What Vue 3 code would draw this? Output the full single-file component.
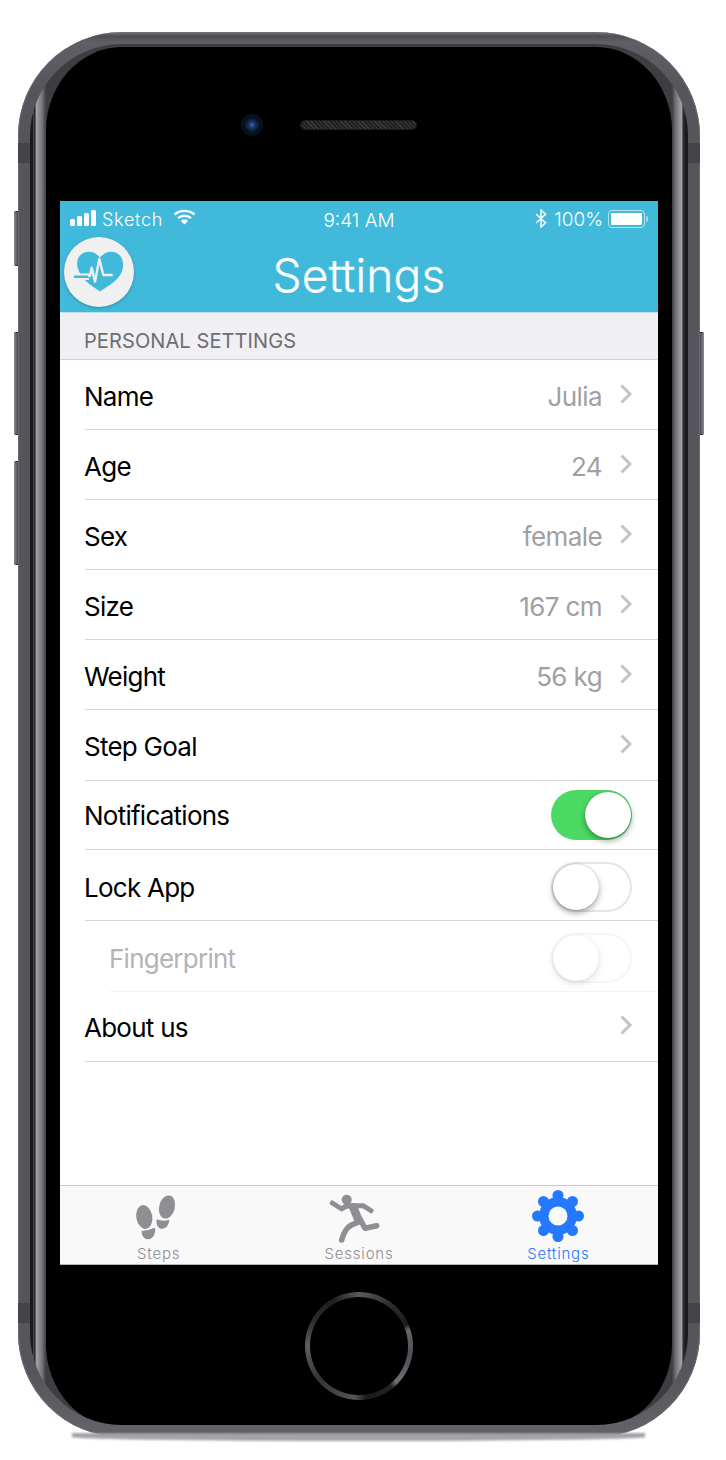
<script setup>
const rows = [
  { label: 'Name', value: 'Julia', kind: 'nav' },
  { label: 'Age', value: '24', kind: 'nav' },
  { label: 'Sex', value: 'female', kind: 'nav' },
  { label: 'Size', value: '167 cm', kind: 'nav' },
  { label: 'Weight', value: '56 kg', kind: 'nav' },
  { label: 'Step Goal', value: '', kind: 'nav' },
  { label: 'Notifications', kind: 'on', cls: 'short' },
  { label: 'Lock App', kind: 'off', cls: 'tall' },
  { label: 'Fingerprint', kind: 'off', cls: 'tall disabled' },
  { label: 'About us', value: '', kind: 'nav' }
]
const teeth = [0, 45, 90, 135, 180, 225, 270, 315]
</script>

<template>
  <div class="page">
    <div class="phone">
      <span class="btn left b1"></span>
      <span class="btn left b2"></span>
      <span class="btn left b3"></span>
      <span class="btn right b2"></span>
      <span class="floor"></span>
      <span class="ant al at"></span>
      <span class="ant ar at"></span>
      <span class="ant al ab"></span>
      <span class="ant ar ab"></span>
      <div class="rim">
        <div class="front">
          <div class="top">
            <span class="camera"></span>
            <span class="speaker"></span>
          </div>
          <div class="screen">
            <header class="nav">
              <div class="status">
                <div class="status-left">
                  <span class="bars"><i></i><i></i><i></i><i></i></span>
                  <span class="carrier">Sketch</span>
                  <svg class="wifi" width="23" height="16" viewBox="0 0 23 16">
                    <path d="M1.500 5.500C7 .6 16 .6 21.500 5.500" fill="none" stroke="#fff" stroke-width="2.400" />
                    <path d="M5 9.200c3.600-3.200 9.400-3.200 13 0" fill="none" stroke="#fff" stroke-width="2.400" />
                    <path d="M11.500 15.500 7.800 11.800c2.100-1.800 5.300-1.800 7.400 0z" fill="#fff" />
                  </svg>
                </div>
                <span class="time">9:41 AM</span>
                <div class="status-right">
                  <svg width="12" height="19" viewBox="0 0 12 19">
                    <path d="M1 5l9.500 8.800L6 18V1l4.500 4.200L1 14" fill="none" stroke="#fff" stroke-width="1.500" />
                  </svg>
                  <span class="pct">100%</span>
                  <span class="battery"><i></i></span>
                  <span class="nub"></span>
                </div>
              </div>
              <div class="nav-main">
                <div class="logo">
                  <svg width="70" height="70" viewBox="0 0 70 70">
                    <path d="M36 54.500C28 49 16 42 13.500 30 11.500 20 18 14.700 25 14.700c5 0 9 3 11 6 2-3 6-6 11-6 7 0 13 5.300 12 15C58 42 44 49 36 54.500z" fill="#41b9db" />
                    <path d="M8 39.700h17" fill="none" stroke="#f0f0f0" stroke-width="6.500" />
                    <path d="M11 39.700h14" fill="none" stroke="#41b9db" stroke-width="2.400" stroke-linecap="round" />
                    <path d="M25 38.700h1l1.700-8 3.300 14 4.300-22.700 4 16h8.400" fill="none" stroke="#f0f0f0" stroke-width="2.400" stroke-linecap="round" stroke-linejoin="round" />
                  </svg>
                </div>
                <h1 class="title">Settings</h1>
              </div>
            </header>

            <div class="section">PERSONAL SETTINGS</div>

            <main class="list">
              <div v-for="row in rows" :key="row.label" class="row" :class="row.cls">
                <span class="label">{{ row.label }}</span>
                <template v-if="row.kind === 'nav'">
                  <span class="value">{{ row.value }}</span>
                  <svg class="chev" width="14" height="22" viewBox="0 0 14 22">
                    <path d="M2.500 2.500 11 11l-8.500 8.500" fill="none" stroke="#c3c3c8" stroke-width="3" />
                  </svg>
                </template>
                <span v-else class="toggle" :class="row.kind"><i></i></span>
              </div>
            </main>

            <nav class="tabs">
              <div class="tab steps">
                <svg width="44" height="50" viewBox="0 0 44 50">
                  <g fill="#8e8e93">
                    <ellipse cx="30" cy="16" rx="7.800" ry="11.800" transform="rotate(14 30 16)" />
                    <path d="M19.600 28.300Q26 31 32.300 28.700C32 34 29 38 24.600 37.700 20.500 37.500 19 33 19.600 28.300z" />
                    <ellipse cx="7.300" cy="26" rx="8" ry="12" transform="rotate(-10 7.300 26)" />
                    <path d="M4.600 40Q11 39.500 18 36.700C19 42 16 48.300 11.300 48.300 7 48.300 4.600 45 4.600 40z" />
                  </g>
                </svg>
                <span>Steps</span>
              </div>
              <div class="tab">
                <svg width="48" height="50" viewBox="5 0 48 50">
                  <circle cx="16.700" cy="7.700" r="5" fill="#8e8e93" />
                  <g fill="none" stroke="#8e8e93" stroke-linecap="round" stroke-linejoin="round">
                    <path d="M2.300 11 11.700 17Q15 13.700 20 13.700H33L41 18.700" stroke-width="5" />
                    <path d="M23.300 15.300 28.500 28" stroke-width="8.500" />
                    <path d="M30 27 35 36.300 46.700 33.700" stroke-width="5.500" />
                    <path d="M28 30.300 Q20 33 17.500 36 14 40 11.700 48" stroke-width="5.500" />
                  </g>
                </svg>
                <span>Sessions</span>
              </div>
              <div class="tab active">
                <svg width="52" height="54" viewBox="-26 -27 52 54">
                  <circle r="19" fill="#2479ff" />
                  <circle v-for="a in teeth" :key="a" r="5.500" cy="-20.500" fill="#2479ff" :transform="`rotate(${a})`" />
                  <circle r="9.500" fill="#f9f9f9" />
                </svg>
                <span>Settings</span>
              </div>
            </nav>
          </div>
          <div class="bottom">
            <span class="home"><i></i></span>
          </div>
        </div>
      </div>
    </div>
  </div>
</template>

<style>
html, body { margin: 0; background: #fff; }
</style>

<style scoped>
.page {
  width: 726px;
  height: 1460px;
  padding: 32px 26px 0 18px;
  box-sizing: border-box;
  overflow: hidden;
  font-family: Inter, "Liberation Sans", sans-serif;
}
.phone {
  position: relative;
  width: 682px;
  height: 1405px;
  border-radius: 104px;
  padding: 12px;
  box-sizing: border-box;
  background: linear-gradient(180deg, #77777d 0, #4e4e54 4px, #5f5f66 10px, #55555b 60px, #55555b 1340px, #626269 1398px, #47474d 1405px);
  box-shadow: inset 1px 0 1px #6a6a72, inset -1px 0 1px #6a6a72;
}
.ant {
  position: absolute;
  width: 12px;
  background: #444449;
}
.al { left: 0; }
.ar { right: 0; }
.at { top: 111px; height: 20px; }
.ab { top: 1271px; height: 20px; }
.btn {
  position: absolute;
  width: 4px;
  background: linear-gradient(90deg, #8a8a90, #4c4c52);
  border: 1px solid #2c2c30;
  border-width: 1px 0;
  box-sizing: border-box;
}
.btn.left { left: -4px; border-radius: 2px 0 0 2px; }
.btn.right { right: -4px; border-radius: 0 2px 2px 0; background: linear-gradient(270deg, #8a8a90, #4c4c52); }
.b1 { top: 179px; height: 55px; }
.b2 { top: 300px; height: 103px; }
.b3 { top: 429px; height: 104px; }
.floor {
  position: absolute;
  left: 54px;
  right: 55px;
  bottom: -4px;
  height: 8px;
  border-radius: 0 0 50% 50%;
  background: #a3a3a6;
  filter: blur(1px);
  z-index: 0;
}
.rim {
  position: relative;
  z-index: 1;
  height: 100%;
  border-radius: 92px;
  overflow: hidden;
  background: linear-gradient(90deg, #1a1a1c 0, #1a1a1c 3px, #56565b 3px, #38383b 4px, #1a1a1c 5px, #a5a5a8 6px, #77777b 12px, #3e3e42 16px, #3e3e42 642px, #77777b 646px, #a5a5a8 652px, #1a1a1c 653px, #38383b 654px, #1a1a1c 655px, #1a1a1c 658px);
}
.front {
  height: 1381px;
  margin: 3px 16px 0;
  border-radius: 76px / 84px;
  background: #000;
  display: flex;
  flex-direction: column;
  overflow: hidden;
}
.top {
  height: 154px;
  flex: none;
  display: flex;
  align-items: center;
  gap: 37px;
  padding: 2px 0 0 195px;
  box-sizing: border-box;
  position: relative;
  top: -1px;
}
.camera {
  width: 22px;
  height: 22px;
  border-radius: 50%;
  margin-top: 1px;
  background: radial-gradient(circle, #3a66c0 0, #17305f 22%, #071018 50%, #0e181d 100%);
}
.speaker {
  width: 117px;
  height: 10px;
  border-radius: 5px;
  background: repeating-linear-gradient(45deg, #3a3a3a 0 1px, #222 1px 3px);
  border: 1px solid #1b1b1b;
  box-sizing: border-box;
  margin-top: 1px;
}
.screen {
  width: 598px;
  height: 1064px;
  margin: 0 14px;
  flex: none;
  background: #fff;
  display: flex;
  flex-direction: column;
}
.nav {
  height: 111px;
  background: #41b9db;
  border-bottom: 1px solid #b8e3f1;
  color: #fff;
  flex: none;
}
.status {
  height: 36px;
  display: flex;
  align-items: center;
  justify-content: space-between;
  padding: 0 10px;
  position: relative;
  font-weight: 300;
}
.status-left, .status-right { display: flex; align-items: center; }
.bars { display: flex; align-items: flex-end; gap: 2px; height: 16px; margin-top: -2px; }
.bars i { width: 5px; background: #fff; border-radius: 1.500px; }
.bars i:nth-child(1) { height: 7px; }
.bars i:nth-child(2) { height: 10px; }
.bars i:nth-child(3) { height: 13px; }
.bars i:nth-child(4) { height: 16px; }
.carrier { font-size: 18px; margin-left: 6px; letter-spacing: .7px; }
.wifi { margin-left: 10px; margin-top: -4px; }
.time {
  position: absolute;
  left: 0;
  right: 0;
  text-align: center;
  font-size: 19px;
  top: 8px;
}
.pct { font-size: 19px; margin-left: 7px; }
.status-right svg { margin-top: -2px; }
.battery {
  width: 37px;
  height: 18px;
  border: 1.500px solid #b6e3f0;
  border-radius: 4px;
  margin-left: 5px;
  padding: 2px;
  box-sizing: border-box;
  margin-top: -1px;
}
.battery i { display: block; height: 100%; background: #fff; border-radius: 1px; }
.nub { width: 2px; height: 6px; background: #a8dcec; margin-left: 1px; border-radius: 0 2px 2px 0; margin-top: -1px; }
.nav-main { position: relative; display: flex; align-items: center; justify-content: center; height: 74px; }
.logo {
  position: absolute;
  left: 4px;
  top: 0;
  width: 70px;
  height: 70px;
  border-radius: 50%;
  background: #f0f0f0;
  box-shadow: 0 1px 3px rgba(0, 0, 0, .25);
}
.title {
  margin: 0;
  font-size: 46px;
  font-weight: 300;
  line-height: 1;
  letter-spacing: .2px;
  -webkit-text-stroke: .3px #fff;
  position: relative;
  top: 1px;
}
.section {
  height: 47px;
  background: #efeff4;
  border-bottom: 1px solid #d4d4d6;
  box-sizing: border-box;
  padding: 17px 0 0 24px;
  font-size: 20px;
  line-height: 22px;
  letter-spacing: .1px;
  color: #6d6d72;
  flex: none;
}
.list { flex: 1; background: #fff; }
.row {
  height: 70.100px;
  margin-left: 25px;
  padding-right: 26px;
  border-bottom: 1px solid #d6d6d8;
  box-sizing: border-box;
  display: flex;
  align-items: center;
  font-size: 26px;
  letter-spacing: -.75px;
  color: #000;
}
.row.short { height: 69px; }
.row.tall { height: 71px; padding-top: 4px; }
.row.disabled { margin-left: 50px; border-bottom-color: #f2f2f3; }
.row.disabled .label { color: #b4b4b6; }
.row.disabled .toggle { opacity: .35; }
.label { flex: 1; margin-left: -1px; padding-top: 3px; }
.row.short .label, .row.tall .label { padding-top: 2px; }
.value { color: #a0a0a4; margin-right: 17px; padding-top: 3px; letter-spacing: -.6px; }
.chev { flex: none; margin-top: -2px; margin-right: -1px; }
.toggle {
  position: relative;
  width: 81px;
  height: 50px;
  border-radius: 25px;
  box-sizing: border-box;
  flex: none;
}
.toggle i {
  position: absolute;
  top: 2px;
  width: 46px;
  height: 46px;
  border-radius: 50%;
  background: #fff;
  box-shadow: 0 3px 6px rgba(0, 0, 0, .35), 0 0 1px rgba(0, 0, 0, .3);
}
.toggle.on { background: #4cd964; }
.toggle.on i { right: 1px; }
.toggle.off { border: 2px solid #e5e5e5; background: #fff; }
.toggle.off i { left: 0; top: 0; }
.tabs {
  height: 80px;
  flex: none;
  background: #f9f9f9;
  border-top: 1px solid #c9c9cc;
  border-bottom: 1px solid #b5b5b8;
  box-sizing: border-box;
  display: grid;
  grid-template-columns: repeat(3, 1fr);
}
.tab {
  position: relative;
  display: flex;
  justify-content: center;
  padding-top: 6px;
  color: #8e8e93;
  font-size: 15px;
  font-weight: 300;
  letter-spacing: .8px;
}
.tab svg { display: block; overflow: visible; }
.tab span { position: absolute; bottom: 1px; left: 0; right: 0; text-align: center; line-height: 18px; }
.tab.steps { padding-top: 5px; }
.tab.steps svg { margin-left: -2px; }
.tab.steps span { right: 2px; }
.tab.active { color: #2479ff; padding-top: 3px; }
.bottom {
  flex: 1;
  display: flex;
  justify-content: center;
  padding-top: 27px;
}
.home {
  width: 108px;
  height: 108px;
  border-radius: 50%;
  padding: 5px;
  box-sizing: border-box;
  background: conic-gradient(#5a5a60 0, #2a2a2c 40deg, #1c1c1e 66deg, #66666c 72deg, #4e4e54 100deg, #6e6e74 134deg, #222224 142deg, #1a1a1c 172deg, #55555a 185deg, #333336 230deg, #5e5e64 270deg, #2a2a2c 300deg, #1e1e20 330deg, #5a5a60 360deg);
}
.home i { display: block; height: 100%; border-radius: 50%; background: #000; }
</style>
